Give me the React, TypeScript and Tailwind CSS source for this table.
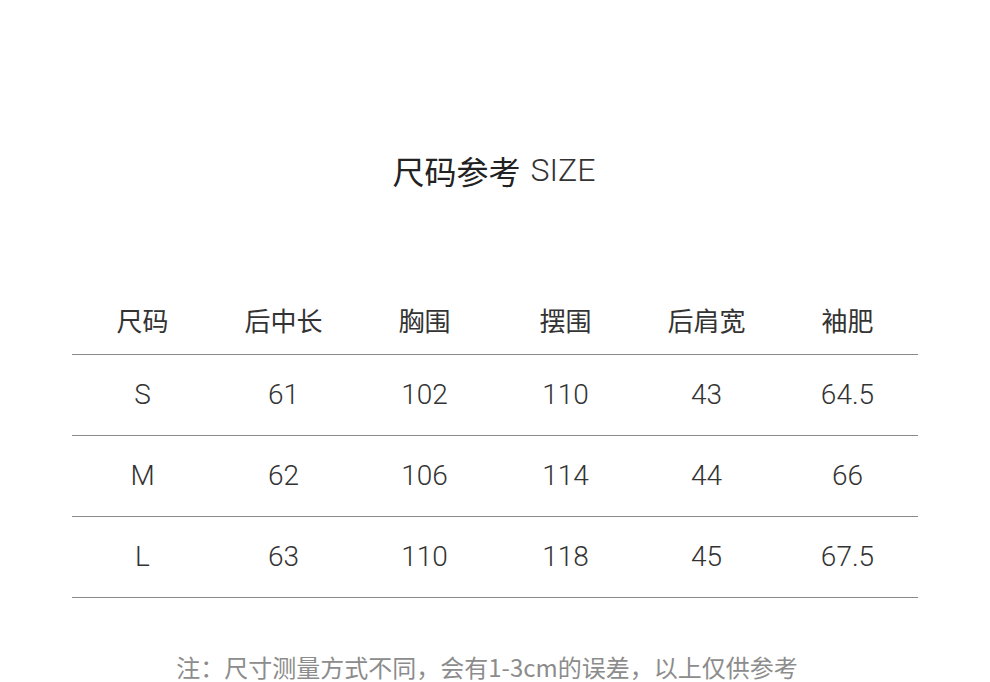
const HEADERS = ['尺码', '后中长', '胸围', '摆围', '后肩宽', '袖肥'];

const ROWS: string[][] = [
  ['S', '61', '102', '110', '43', '64.5'],
  ['M', '62', '106', '114', '44', '66'],
  ['L', '63', '110', '118', '45', '67.5'],
];

export default function App() {
  return (
    <div className="w-[990px] h-[682px] overflow-hidden bg-white">
      {/* Title */}
      <div className="mt-[150px] h-[40px] flex items-center justify-center pr-[2px] text-[#222] leading-[40px]">
        <span className="text-[32px] font-normal font-['Noto_Sans_CJK_SC',sans-serif]">尺码参考</span>
        <span className="ml-[10px] text-[32px] font-light text-[#333] font-['Roboto',sans-serif]">SIZE</span>
      </div>

      {/* Table */}
      <div className="mt-[98px] mx-auto w-[846px]">
        <div className="grid grid-cols-6 h-[67px] border-b border-[#8a8a8a] items-center">
          {HEADERS.map((h) => (
            <div key={h} className="text-center text-[26px] text-[#333] leading-none font-['Noto_Sans_CJK_SC',serif] -translate-y-[1px]">
              {h}
            </div>
          ))}
        </div>
        {ROWS.map((row) => (
          <div key={row[0]} className="grid grid-cols-6 h-[81px] border-b border-[#8a8a8a] items-center">
            {row.map((v, i) => (
              <div key={i} className="text-center text-[28px] font-light text-[#333] leading-none font-['Roboto',sans-serif]">
                {v}
              </div>
            ))}
          </div>
        ))}
      </div>

      {/* Note */}
      <div className="mt-[57px] pr-[16px] text-center text-[24px] leading-[24px] text-[#8c8c8c] font-['Noto_Sans_CJK_SC',sans-serif]">
        注：尺寸测量方式不同，会有1-3cm的误差，以上仅供参考
      </div>
    </div>
  );
}
